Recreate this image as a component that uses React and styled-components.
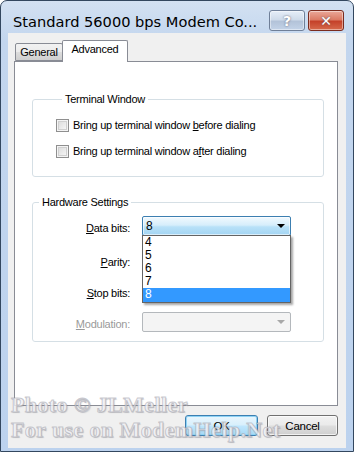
import React from "react";
import styled, { createGlobalStyle } from "styled-components";

const Global = createGlobalStyle`
  html, body { margin: 0; padding: 0; background: #fff; }
  body { font-family: "Liberation Sans", Arial, sans-serif; }
`;

const UI_FONT = `"Liberation Sans", Arial, sans-serif`;

const Window = styled.div`
  position: relative;
  width: 354px;
  height: 452px;
  box-sizing: border-box;
  border: 1px solid #33475f;
  border-radius: 7px 7px 0 0;
  background: linear-gradient(180deg, #d3e1f2 0px, #c3d6ee 40px, #bcd2ee 100%);
  display: flex;
  flex-direction: column;
  overflow: hidden;
`;

const TitleBar = styled.div`
  height: 32px;
  display: flex;
  align-items: flex-start;
  padding: 0 9px 0 12px;
  box-sizing: border-box;
`;

const Title = styled.div`
  flex: 1;
  font-family: "DejaVu Sans", sans-serif;
  font-size: 14.6px;
  line-height: 18px;
  color: #000;
  padding-top: 12px;
  white-space: nowrap;
`;

const CaptionButtons = styled.div`
  display: flex;
  gap: 3px;
  margin-top: 9px;
`;

const CaptionButton = styled.div`
  width: 36px;
  height: 21px;
  box-sizing: border-box;
  border: 1px solid ${(p) => (p.$close ? "#7a2b1e" : "#6f7f98")};
  border-radius: 3px;
  background: ${(p) =>
    p.$close
      ? "linear-gradient(180deg, #eaa899 0%, #dc7c66 45%, #c5422a 55%, #d66a4c 100%)"
      : "linear-gradient(180deg, #e6eef8 0%, #cfdbea 45%, #b3c3d9 55%, #c3d3e8 100%)"};
  box-shadow: inset 0 0 0 1px rgba(255, 255, 255, 0.45);
  display: flex;
  align-items: center;
  justify-content: center;
  color: #fff;
  font-family: "DejaVu Sans", sans-serif;
  font-weight: bold;
  font-size: 14px;
  text-shadow: 0 0 2px #556;
`;

const Client = styled.div`
  margin: 0 7px 0 7px;
  height: 415px;
  background: #f0f0f0;
  padding: 8px 8px 12px 6px;
  box-sizing: border-box;
  display: flex;
  flex-direction: column;
  font-family: ${UI_FONT};
  font-size: 11px;
  letter-spacing: -0.25px;
  color: #000;
`;

const TabStrip = styled.div`
  height: 20px;
  display: flex;
  align-items: flex-end;
  padding-left: 1px;
  position: relative;
  z-index: 1;
`;

const Tab = styled.div`
  box-sizing: border-box;
  height: ${(p) => (p.$active ? "22px" : "18px")};
  width: ${(p) => p.$w}px;
  margin-bottom: ${(p) => (p.$active ? "-1px" : "0")};
  margin-left: ${(p) => (p.$active ? "-1px" : "0")};
  border: 1px solid #898c95;
  border-bottom: ${(p) => (p.$active ? "none" : "1px solid #898c95")};
  border-radius: 2px 2px 0 0;
  background: ${(p) =>
    p.$active ? "#fff" : "linear-gradient(180deg, #f2f2f2 0%, #ebebeb 50%, #dddddd 51%, #cfcfcf 100%)"};
  display: flex;
  justify-content: center;
  padding-top: 2px;
  line-height: 13px;
`;

const Panel = styled.div`
  height: 345px;
  box-sizing: border-box;
  background: #fff;
  border: 1px solid #898c95;
  padding: 30px 0 0 17px;
  display: flex;
  flex-direction: column;
  gap: 18px;
`;

const Group = styled.fieldset`
  margin: 0;
  width: 292px;
  box-sizing: border-box;
  border: 1px solid #d5dfe5;
  border-radius: 3px;
  padding: ${(p) => p.$pad};
  min-width: 0;
  display: flex;
  flex-direction: column;
  gap: ${(p) => p.$gap || 0}px;
`;

const Legend = styled.legend`
  margin-left: 6px;
  padding: 0 3px;
  line-height: 14px;
  color: #000;
`;

const CheckRow = styled.label`
  display: flex;
  align-items: center;
  height: 16px;
  gap: 4px;
`;

const CheckBox = styled.span`
  width: 13px;
  height: 13px;
  box-sizing: border-box;
  border: 1px solid #8f8f8f;
  background: linear-gradient(135deg, #d8d8d8 0%, #f0f0f0 70%, #fff 100%);
  box-shadow: inset 0 0 0 1px #f4f4f4, inset 0 0 0 2px #d0d0d0;
`;

const U = styled.span`
  text-decoration: underline;
  text-underline-offset: 1px;
`;

const Row = styled.div`
  display: flex;
  align-items: flex-start;
  gap: 12px;
  margin-top: ${(p) => p.$mt || 0}px;
  height: 20px;
  position: relative;
`;

const FieldLabel = styled.div`
  width: 97px;
  text-align: right;
  padding-top: 6px;
  line-height: 13px;
  color: ${(p) => (p.$disabled ? "#9a9a9a" : "#000")};
`;

const Combo = styled.div`
  width: 149px;
  height: 20px;
  box-sizing: border-box;
  border: 1px solid ${(p) => (p.$state === "open" ? "#3c7fb1" : "#b4b8bc")};
  border-radius: 2px;
  background: ${(p) =>
    p.$state === "open"
      ? "linear-gradient(180deg, #f2f9fe 0%, #d6eefb 45%, #b8e1f8 55%, #a3d5f3 100%)"
      : "#f4f4f4"};
  box-shadow: ${(p) => (p.$state === "open" ? "inset 0 0 0 1px rgba(255,255,255,0.6)" : "none")};
  display: flex;
  align-items: center;
  justify-content: space-between;
  padding: 0 5px 0 3px;
  font-size: 12px;
  letter-spacing: 0;
`;

const Arrow = styled.span`
  width: 0;
  height: 0;
  border-left: 4px solid transparent;
  border-right: 4px solid transparent;
  border-top: 4px solid ${(p) => (p.$disabled ? "#a8a8a8" : "#000")};
`;

const DropList = styled.div`
  position: absolute;
  left: 109px;
  top: 19px;
  width: 149px;
  box-sizing: border-box;
  border: 1px solid #646464;
  background: #fff;
  box-shadow: 2px 2px 2px rgba(0, 0, 0, 0.35);
  z-index: 5;
  font-size: 12px;
  letter-spacing: 0;
`;

const DropItem = styled.div`
  height: 13px;
  line-height: 13px;
  padding-left: 2px;
  background: ${(p) => (p.$sel ? "#3399ff" : "transparent")};
  color: ${(p) => (p.$sel ? "#fff" : "#000")};
  &:last-child {
    height: 14px;
  }
`;

const ButtonRow = styled.div`
  margin-top: 9px;
  display: flex;
  justify-content: flex-end;
  gap: 9px;
`;

const Button = styled.div`
  width: ${(p) => p.$w}px;
  height: 21px;
  box-sizing: border-box;
  border: 1px solid ${(p) => (p.$default ? "#3c7fb1" : "#707070")};
  border-radius: 3px;
  background: ${(p) =>
    p.$default
      ? "linear-gradient(180deg, #eaf6fd 0%, #d9f0fc 45%, #bee6fd 55%, #a7d9f5 100%)"
      : "linear-gradient(180deg, #f2f2f2 0%, #ebebeb 45%, #dddddd 55%, #cfcfcf 100%)"};
  box-shadow: ${(p) =>
    p.$default ? "inset 0 0 0 1px #8fd3f5" : "inset 0 0 0 1px rgba(255,255,255,0.7)"};
  display: flex;
  align-items: center;
  justify-content: center;
  font-size: 11.5px;
`;

const Watermark = styled.div`
  position: absolute;
  left: 10px;
  top: 391px;
  font-family: "Liberation Serif", "Times New Roman", serif;
  font-weight: bold;
  font-size: 22px;
  line-height: 25px;
  letter-spacing: 0.4px;
  color: rgba(248, 248, 252, 0.8);
  -webkit-text-stroke: 1px rgba(150, 150, 160, 0.5);
  text-shadow: 1px 1px 1px rgba(120, 120, 130, 0.3);
  pointer-events: none;
  white-space: nowrap;
  z-index: 10;
`;

export default function App() {
  return (
    <>
      <Global />
      <Window>
        <TitleBar>
          <Title>Standard 56000 bps Modem Co...</Title>
          <CaptionButtons>
            <CaptionButton>?</CaptionButton>
            <CaptionButton $close>✕</CaptionButton>
          </CaptionButtons>
        </TitleBar>
        <Client>
          <TabStrip>
            <Tab $w={48}>General</Tab>
            <Tab $active $w={66}>Advanced</Tab>
          </TabStrip>
          <Panel>
            <Group $pad="11px 0 17px 23px" $gap={10}>
              <Legend>Terminal Window</Legend>
              <CheckRow>
                <CheckBox />
                <span>
                  Bring up terminal window <U>b</U>efore dialing
                </span>
              </CheckRow>
              <CheckRow>
                <CheckBox />
                <span>
                  Bring up terminal window a<U>f</U>ter dialing
                </span>
              </CheckRow>
            </Group>
            <Group $pad="7px 0 9px 0">
              <Legend>Hardware Settings</Legend>
              <Row>
                <FieldLabel>
                  <U>D</U>ata bits:
                </FieldLabel>
                <Combo $state="open">
                  <span>8</span>
                  <Arrow />
                </Combo>
                <DropList>
                  {["4", "5", "6", "7", "8"].map((v) => (
                    <DropItem key={v} $sel={v === "8"}>
                      {v}
                    </DropItem>
                  ))}
                </DropList>
              </Row>
              <Row $mt={14}>
                <FieldLabel>
                  <U>P</U>arity:
                </FieldLabel>
                <Combo />
              </Row>
              <Row $mt={11}>
                <FieldLabel>
                  <U>S</U>top bits:
                </FieldLabel>
                <Combo />
              </Row>
              <Row $mt={11}>
                <FieldLabel $disabled>
                  <U>M</U>odulation:
                </FieldLabel>
                <Combo>
                  <span />
                  <Arrow $disabled />
                </Combo>
              </Row>
            </Group>
          </Panel>
          <ButtonRow>
            <Button $default $w={73}>OK</Button>
            <Button $w={71}>Cancel</Button>
          </ButtonRow>
        </Client>
        <Watermark>
          Photo © JLMeller
          <br />
          For use on ModemHelp.Net
        </Watermark>
      </Window>
    </>
  );
}
